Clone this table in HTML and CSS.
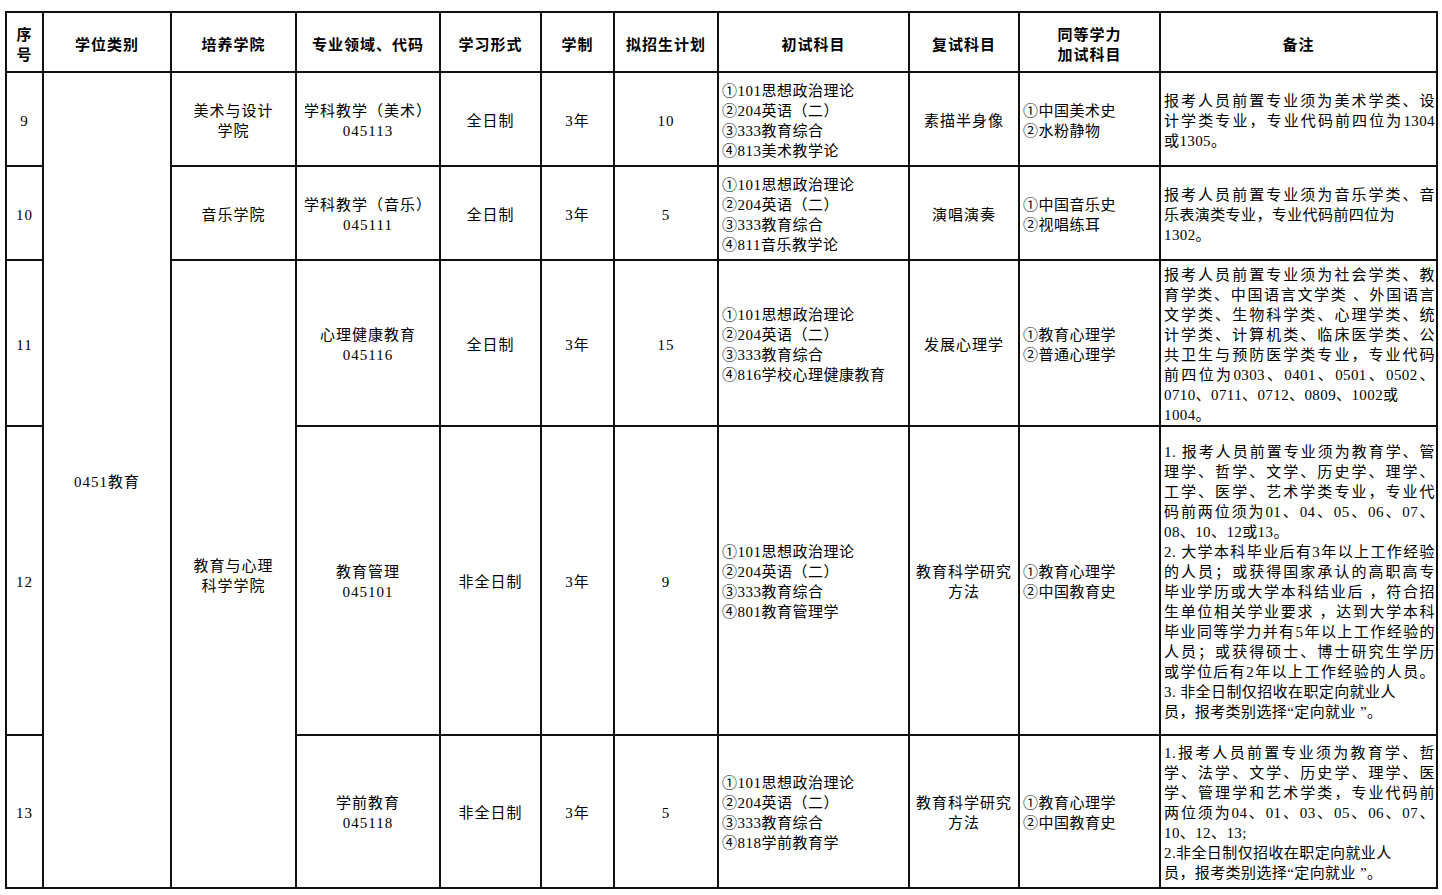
FILE: index.html
```html
<!DOCTYPE html>
<html lang="zh-CN">
<head>
<meta charset="utf-8">
<title>招生计划</title>
<link rel="stylesheet" href="styles.css">
</head>
<body>
<table class="plan">
  <colgroup>
    <col class="c1"><col class="c2"><col class="c3"><col class="c4"><col class="c5"><col class="c6"><col class="c7"><col class="c8"><col class="c9"><col class="c10"><col class="c11">
  </colgroup>
  <tr class="head">
    <th>序<br>号</th>
    <th>学位类别</th>
    <th>培养学院</th>
    <th>专业领域、代码</th>
    <th>学习形式</th>
    <th>学制</th>
    <th>拟招生计划</th>
    <th>初试科目</th>
    <th>复试科目</th>
    <th>同等学力<br>加试科目</th>
    <th>备注</th>
  </tr>
  <tr class="r9">
    <td>9</td>
    <td rowspan="5">0451教育</td>
    <td>美术与设计<br>学院</td>
    <td>学科教学（美术）<br>045113</td>
    <td>全日制</td>
    <td>3年</td>
    <td>10</td>
    <td class="left">①101思想政治理论<br>②204英语（二）<br>③333教育综合<br>④813美术教学论</td>
    <td>素描半身像</td>
    <td class="left">①中国美术史<br>②水粉静物</td>
    <td class="note">
      <div class="j">报考人员前置专业须为美术学类、设</div>
      <div class="j">计学类专业，专业代码前四位为1304</div>
      <div>或1305。</div>
    </td>
  </tr>
  <tr class="r10">
    <td>10</td>
    <td>音乐学院</td>
    <td>学科教学（音乐）<br>045111</td>
    <td>全日制</td>
    <td>3年</td>
    <td>5</td>
    <td class="left">①101思想政治理论<br>②204英语（二）<br>③333教育综合<br>④811音乐教学论</td>
    <td>演唱演奏</td>
    <td class="left">①中国音乐史<br>②视唱练耳</td>
    <td class="note">
      <div class="j">报考人员前置专业须为音乐学类、音</div>
      <div>乐表演类专业，专业代码前四位为</div>
      <div>1302。</div>
    </td>
  </tr>
  <tr class="r11">
    <td>11</td>
    <td rowspan="3">教育与心理<br>科学学院</td>
    <td>心理健康教育<br>045116</td>
    <td>全日制</td>
    <td>3年</td>
    <td>15</td>
    <td class="left">①101思想政治理论<br>②204英语（二）<br>③333教育综合<br>④816学校心理健康教育</td>
    <td>发展心理学</td>
    <td class="left">①教育心理学<br>②普通心理学</td>
    <td class="note">
      <div class="j">报考人员前置专业须为社会学类、教</div>
      <div class="j">育学类、中国语言文学类 、外国语言</div>
      <div class="j">文学类、生物科学类、心理学类、统</div>
      <div class="j">计学类、计算机类、临床医学类、公</div>
      <div class="j">共卫生与预防医学类专业，专业代码</div>
      <div class="j">前四位为0303、0401、0501、0502、</div>
      <div>0710、0711、0712、0809、1002或</div>
      <div>1004。</div>
    </td>
  </tr>
  <tr class="r12">
    <td>12</td>
    <td>教育管理<br>045101</td>
    <td>非全日制</td>
    <td>3年</td>
    <td>9</td>
    <td class="left">①101思想政治理论<br>②204英语（二）<br>③333教育综合<br>④801教育管理学</td>
    <td>教育科学研究<br>方法</td>
    <td class="left">①教育心理学<br>②中国教育史</td>
    <td class="note">
      <div class="j">1. 报考人员前置专业须为教育学、管</div>
      <div class="j">理学、哲学、文学、历史学、理学、</div>
      <div class="j">工学、医学、艺术学类专业，专业代</div>
      <div class="j">码前两位须为01、04、05、06、07、</div>
      <div>08、10、12或13。</div>
      <div class="j">2. 大学本科毕业后有3年以上工作经验</div>
      <div class="j">的人员；或获得国家承认的高职高专</div>
      <div class="j">毕业学历或大学本科结业后 ，符合招</div>
      <div class="j">生单位相关学业要求 ，达到大学本科</div>
      <div class="j">毕业同等学力并有5年以上工作经验的</div>
      <div class="j">人员；或获得硕士、博士研究生学历</div>
      <div class="j">或学位后有2年以上工作经验的人员。</div>
      <div>3. 非全日制仅招收在职定向就业人</div>
      <div>员，报考类别选择“定向就业 ”。</div>
    </td>
  </tr>
  <tr class="r13">
    <td>13</td>
    <td>学前教育<br>045118</td>
    <td>非全日制</td>
    <td>3年</td>
    <td>5</td>
    <td class="left">①101思想政治理论<br>②204英语（二）<br>③333教育综合<br>④818学前教育学</td>
    <td>教育科学研究<br>方法</td>
    <td class="left">①教育心理学<br>②中国教育史</td>
    <td class="note">
      <div class="j">1.报考人员前置专业须为教育学、哲</div>
      <div class="j">学、法学、文学、历史学、理学、医</div>
      <div class="j">学、管理学和艺术学类，专业代码前</div>
      <div class="j">两位须为04、01、03、05、06、07、</div>
      <div>10、12、13;</div>
      <div>2.非全日制仅招收在职定向就业人</div>
      <div>员，报考类别选择“定向就业 ”。</div>
    </td>
  </tr>
</table>
</body>
</html>
```

FILE: styles.css
```css
html, body {
  margin: 0;
  padding: 0;
  background: #fff;
}

body {
  padding: 11px 0 0 5px;
  font-family: "Liberation Serif", "Noto Sans CJK SC", serif;
  font-size: 15px;
  color: #000;
}

.plan {
  border-collapse: collapse;
  table-layout: fixed;
  width: 1433px;
}

.c1 { width: 37px; }
.c2 { width: 128px; }
.c3 { width: 125px; }
.c4 { width: 144px; }
.c5 { width: 101px; }
.c6 { width: 73px; }
.c7 { width: 104px; }
.c8 { width: 191px; }
.c9 { width: 110px; }
.c10 { width: 141px; }
.c11 { width: 277px; }

.plan th,
.plan td {
  border: 2px solid #111;
  padding: 3px 2px 0 2px;
  text-align: center;
  vertical-align: middle;
  line-height: 20px;
  letter-spacing: 1px;
  overflow: hidden;
}

.plan th {
  font-family: "Noto Sans CJK SC", sans-serif;
  font-weight: bold;
  font-size: 15px;
}

.head th { height: 55px; }
.r9 td { height: 89px; }
.r10 td { height: 89px; }
.r11 td { height: 161px; }
.r12 td { height: 304px; }
.r13 td { height: 148px; }

.plan td.left {
  text-align: left;
  padding-left: 3px;
  letter-spacing: 0.5px;
}

.plan td.note {
  text-align: left;
  padding: 3px 1px 0 3px;
  letter-spacing: 0.4px;
}

.note div {
  white-space: nowrap;
}

.note .j {
  text-align: justify;
  text-align-last: justify;
}
```
